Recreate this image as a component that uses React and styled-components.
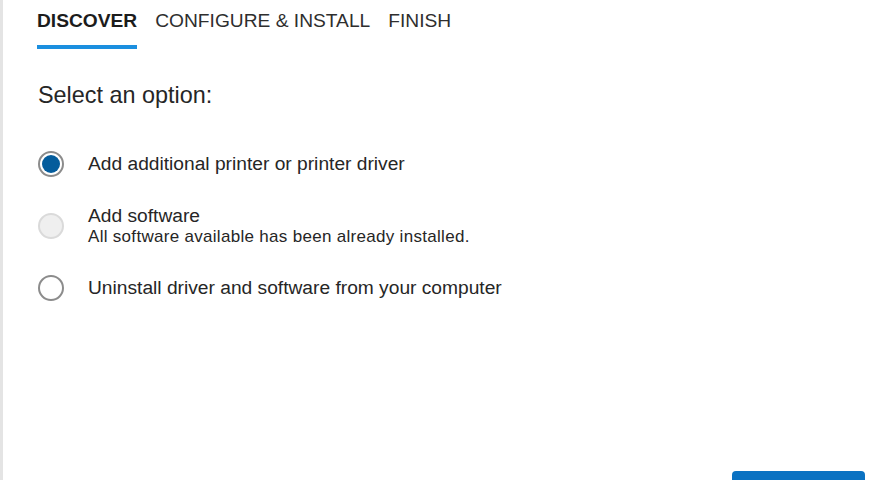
import React from "react";
import styled, { createGlobalStyle } from "styled-components";

const Global = createGlobalStyle`
  html, body { margin: 0; padding: 0; background: #fff; overflow: hidden; }
  body { font-family: "Liberation Sans", Arial, sans-serif; color: #222; }
`;

const Page = styled.div`
  width: 880px;
  height: 480px;
  box-sizing: border-box;
  border-left: 3px solid #e4e4e4;
  padding-left: 35px;
  overflow: hidden;
  display: flex;
  flex-direction: column;
`;

const Tabs = styled.div`
  display: flex;
  gap: 18px;
  padding-top: 9px;
  margin-left: -1px;
`;

const Tab = styled.div`
  font-size: 19.2px;
  line-height: 24px;
  padding-bottom: 12px;
  border-bottom: 4px solid ${(p) => (p.$active ? "#1b8fdf" : "transparent")};
  font-weight: ${(p) => (p.$active ? 700 : 400)};
  color: ${(p) => (p.$active ? "#1c1c1c" : "#2e2e2e")};
`;

const Heading = styled.div`
  font-size: 23.4px;
  line-height: 26px;
  margin-top: 33px;
  color: #262626;
`;

const Options = styled.div`
  display: flex;
  flex-direction: column;
  gap: 28px;
  margin-top: 43px;
`;

const Option = styled.label`
  display: flex;
  align-items: center;
  gap: 24px;
`;

const Radio = styled.span`
  width: 26px;
  height: 26px;
  box-sizing: border-box;
  border-radius: 50%;
  flex: none;
  display: flex;
  align-items: center;
  justify-content: center;
  border: 2px solid ${(p) => (p.$disabled ? "#dadada" : "#8c8c8c")};
  background: ${(p) => (p.$disabled ? "#efefef" : "#fff")};
  &::after {
    content: "";
    width: 18px;
    height: 18px;
    border-radius: 50%;
    background: #045c9c;
    display: ${(p) => (p.$checked ? "block" : "none")};
  }
`;

const Texts = styled.div`
  display: flex;
  flex-direction: column;
`;

const Label = styled.span`
  font-size: 19.2px;
  line-height: 22px;
  color: #262626;
`;

const Sub = styled.span`
  font-size: 17px;
  letter-spacing: 0.3px;
  line-height: 20px;
  color: #262626;
`;

const Footer = styled.div`
  display: flex;
  justify-content: flex-end;
  padding-right: 15px;
  margin-top: 170px;
`;

const Button = styled.button`
  width: 133px;
  height: 36px;
  border: none;
  border-radius: 4px;
  background: #0b72c2;
  flex: none;
`;

export default function App() {
  return (
    <>
      <Global />
      <Page>
        <Tabs>
          <Tab $active>DISCOVER</Tab>
          <Tab>CONFIGURE &amp; INSTALL</Tab>
          <Tab>FINISH</Tab>
        </Tabs>
        <Heading>Select an option:</Heading>
        <Options>
          <Option>
            <Radio $checked />
            <Texts>
              <Label>Add additional printer or printer driver</Label>
            </Texts>
          </Option>
          <Option>
            <Radio $disabled />
            <Texts>
              <Label>Add software</Label>
              <Sub>All software available has been already installed.</Sub>
            </Texts>
          </Option>
          <Option>
            <Radio />
            <Texts>
              <Label>Uninstall driver and software from your computer</Label>
            </Texts>
          </Option>
        </Options>
        <Footer>
          <Button />
        </Footer>
      </Page>
    </>
  );
}
